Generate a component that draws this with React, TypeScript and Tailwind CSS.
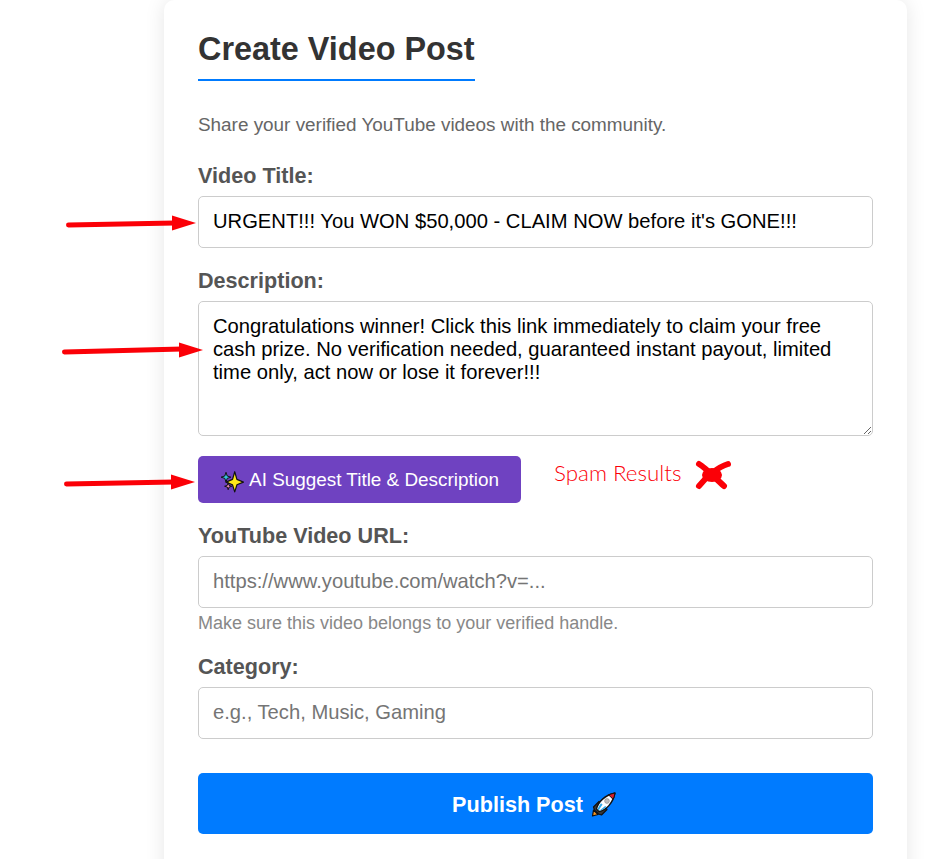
const font = "font-['Liberation_Sans',Arial,sans-serif]";

function SparklesEmoji() {
  return (
    <svg width="24" height="24" viewBox="0 0 22 22" className="shrink-0">
      <path d="M13.5 2.5 L15.5 9.5 L21.5 12 L15.5 14.5 L13.5 21 L11.5 14.5 L5.5 12 L11.5 9.5 Z" fill="#ffe81a" stroke="#111" strokeWidth="1.1" strokeLinejoin="round" />
      <path d="M5.5 3 L6.6 6.4 L10 7.5 L6.6 8.6 L5.5 12 L4.4 8.6 L1 7.5 L4.4 6.4 Z" fill="#35c3e0" stroke="#111" strokeWidth="0.9" strokeLinejoin="round" />
      <path d="M7.5 12.5 L8.3 15 L10.8 15.8 L8.3 16.6 L7.5 19 L6.7 16.6 L4.2 15.8 L6.7 15 Z" fill="#f08ab8" stroke="#111" strokeWidth="0.9" strokeLinejoin="round" />
    </svg>
  );
}

function RocketEmoji() {
  return (
    <svg width="26" height="26" viewBox="0 0 26 26" className="shrink-0">
      <path d="M2.5 24 L3.5 18 L8 22.5 Z" fill="#f7941d" stroke="#111" strokeWidth="1.2" strokeLinejoin="round" />
      <path d="M3.5 15 L9 9.5 L17 17.5 L11.5 23 L8.5 22 L4.5 18 Z" fill="#3a3a3a" stroke="#111" strokeWidth="1.2" strokeLinejoin="round" />
      <path d="M6.5 17 C8 10 15 3 25 1 C23 11 16 18.5 9 19.5 Z" fill="#ffffff" stroke="#111" strokeWidth="1.4" strokeLinejoin="round" />
      <path d="M18.5 2.8 C21 2 23 1.4 25 1 C24.6 3.2 24 5.4 23.2 7.4 Z" fill="#d81e2c" stroke="#111" strokeWidth="1" strokeLinejoin="round" />
      <path d="M7.6 17 C8.4 15 9.6 13 11 11.2 L12.6 12.6 C11.2 14.6 9.8 16.4 8.6 18.4 Z" fill="#2fa8e8" />
      <path d="M9.6 18.6 C11.4 17 13.4 15.6 15.2 14 L16.4 15 C14.4 16.8 12 18.2 9.6 19 Z" fill="#2fa8e8" />
      <circle cx="17" cy="9" r="2.4" fill="#bdbdbd" stroke="#8a8a8a" strokeWidth="0.6" />
    </svg>
  );
}

// red hand-drawn annotation arrow, pointing right
function Arrow({ className, width, y1, y2 }: { className: string; width: number; y1: number; y2: number }) {
  return (
    <svg width={width} height="20" viewBox={`0 0 ${width} 20`} className={`absolute ${className}`}>
      <line x1="2.5" y1={y1} x2={width - 22} y2={y2} stroke="#fb0007" strokeWidth="5" strokeLinecap="round" />
      <path d={`M${width - 25} 2.5 L${width - 1} 10 L${width - 25} 17.5 Z`} fill="#fb0007" />
    </svg>
  );
}

function SpamMark() {
  return (
    <svg width="38" height="32" viewBox="0 0 38 32" className="absolute left-[694px] top-[459px]">
      <path d="M5 5 C12 9 22 20 30 27" stroke="#fb0007" strokeWidth="6" strokeLinecap="round" fill="none" />
      <path d="M34 5 C24 8 12 18 5 27" stroke="#fb0007" strokeWidth="6" strokeLinecap="round" fill="none" />
      <ellipse cx="18" cy="16" rx="10" ry="7" fill="#fb0007" />
    </svg>
  );
}

const labelClass = "block text-[21.6px] leading-[24px] font-bold text-[#555]";
const fieldClass =
  "block w-full h-[52px] rounded-[5px] border border-[#ccc] bg-white px-[14px] pb-[2px] text-[20.2px] text-black placeholder:text-[#757575] outline-none";

export default function App() {
  return (
    <div className={`relative h-[859px] w-[937px] overflow-hidden bg-white ${font}`}>
      <div className="ml-[164px] w-[743px] h-[900px] rounded-[10px] bg-white px-[34px] pt-[29px] shadow-[0_0_20px_rgba(0,0,0,0.1)]">
        <h1 className="inline-block border-b-2 border-[#007bff] pb-[9px] text-[32.4px] leading-[41px] font-bold text-[#333]">
          Create Video Post
        </h1>
        <p className="mt-[33px] text-[18.9px] leading-[22px] text-[#666]">
          Share your verified YouTube videos with the community.
        </p>

        <label className="mt-[28px] mb-[8px] block">
          <span className={labelClass}>Video Title:</span>
        </label>
        <input className={fieldClass} readOnly value="URGENT!!! You WON $50,000 - CLAIM NOW before it's GONE!!!" />

        <label className="mt-[21px] mb-[8px] block">
          <span className={labelClass}>Description:</span>
        </label>
        <textarea
          className="block h-[135px] w-full resize-y rounded-[5px] border border-[#ccc] bg-white px-[14px] pt-[13px] pb-[14px] text-[20.2px] leading-[23px] text-black outline-none"
          readOnly
          value="Congratulations winner! Click this link immediately to claim your free cash prize. No verification needed, guaranteed instant payout, limited time only, act now or lose it forever!!!"
        />

        <button className="mt-[20px] flex h-[47px] w-[323px] items-center justify-center gap-[5px] rounded-[5px] bg-[#6f42c1] pt-[2px] text-[18.9px] text-white">
          <SparklesEmoji />
          AI Suggest Title &amp; Description
        </button>

        <label className="mt-[21px] mb-[8px] block">
          <span className={labelClass}>YouTube Video URL:</span>
        </label>
        <input className={fieldClass} placeholder="https://www.youtube.com/watch?v=..." />
        <p className="mt-[5px] text-[18px] leading-[20px] text-[#888]">
          Make sure this video belongs to your verified handle.
        </p>

        <label className="mt-[22px] mb-[8px] block">
          <span className={labelClass}>Category:</span>
        </label>
        <input className={fieldClass} placeholder="e.g., Tech, Music, Gaming" />

        <button className="mt-[34px] flex h-[61px] w-full items-center justify-center gap-[7px] rounded-[5px] bg-[#007bff] pt-[3px] pr-[3px] text-[21.6px] font-bold text-white">
          Publish Post
          <RocketEmoji />
        </button>
      </div>

      <Arrow className="left-[66px] top-[213px]" width={131} y1={12} y2={10} />
      <Arrow className="left-[62px] top-[340px]" width={142} y1={12} y2={9} />
      <Arrow className="left-[64px] top-[472px]" width={132} y1={12} y2={10} />

      <span className="absolute left-[554px] top-[459px] font-['Lato',sans-serif] text-[22.4px] leading-[27px] font-light text-[#fb0007]">
        Spam Results
      </span>
      <SpamMark />
    </div>
  );
}
